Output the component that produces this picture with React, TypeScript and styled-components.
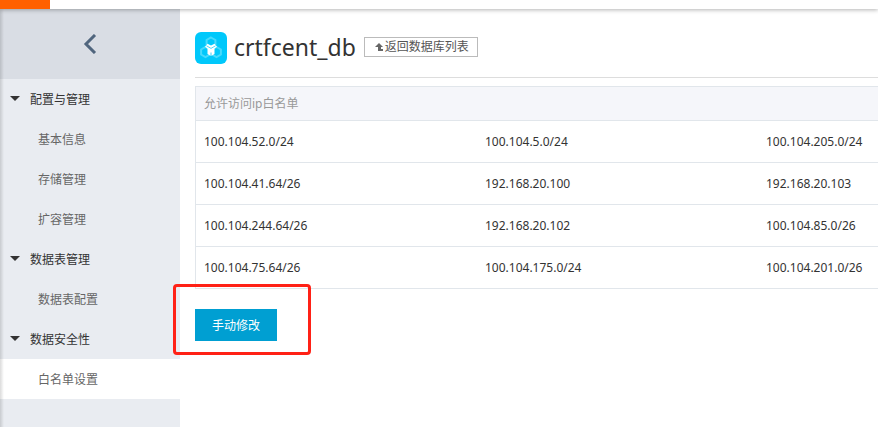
import React from "react";
import styled, { createGlobalStyle } from "styled-components";

const edgeShade = "linear-gradient(to right, rgba(0, 0, 0, 0.14), rgba(0, 0, 0, 0) 4px)";

const GlobalStyle = createGlobalStyle`
  *, *::before, *::after { box-sizing: border-box; }
  html, body, #root { height: 100%; }
  body {
    margin: 0;
    overflow: hidden;
    background: #fff;
    color: #333;
    font-family: "Noto Sans", "Noto Sans CJK SC", sans-serif;
    font-size: 12px;
    line-height: 20px;
  }
`;

const Page = styled.div`
  display: flex;
  flex-direction: column;
  min-height: 100%;
`;

const TopBar = styled.header`
  position: relative;
  z-index: 1;
  height: 9px;
  background: #fff;
  box-shadow: 0 1px 4px rgba(0, 0, 0, 0.3);
`;

const Brand = styled.div`
  width: 50px;
  height: 100%;
  background: #ff6000;
`;

const Body = styled.div`
  display: flex;
  flex: 1;
`;

const Sidebar = styled.nav`
  flex: 0 0 180px;
  background: ${edgeShade}, #e9ecf1;
`;

const Collapse = styled.button`
  display: flex;
  align-items: center;
  justify-content: center;
  width: 100%;
  height: 70px;
  padding: 0;
  border: 0;
  background: ${edgeShade}, #d9dde4;
  cursor: pointer;
`;

const GroupTitle = styled.button`
  display: flex;
  align-items: center;
  gap: 10px;
  width: 100%;
  height: 40px;
  padding: 2px 10px 0;
  border: 0;
  background: none;
  color: #333;
  font: inherit;
  cursor: pointer;
`;

const NavLink = styled.a<{ $active?: boolean }>`
  display: block;
  padding: 11px 38px 9px;
  color: #666;
  text-decoration: none;
  background: ${(p) => (p.$active ? `${edgeShade}, #fff` : "none")};
`;

const Main = styled.main`
  flex: 1;
  min-width: 0;
  padding-left: 15px;
`;

const Heading = styled.div`
  display: flex;
  align-items: flex-start;
  gap: 7px;
  height: 69px;
  margin-bottom: 8px;
  padding-top: 23px;
  border-bottom: 1px solid #ddd;
`;

const HeadingText = styled.div`
  display: flex;
  align-items: center;
  gap: 8px;
`;

const Title = styled.h1`
  margin: 0;
  font-size: 23px;
  font-weight: 400;
  line-height: 30px;
`;

const BackButton = styled.button`
  display: flex;
  align-items: center;
  gap: 1px;
  height: 20px;
  padding: 0 8px 0 10px;
  border: 1px solid #bbb;
  background: #fff;
  color: #555;
  font: inherit;
  line-height: 18px;
  white-space: nowrap;
  cursor: pointer;
`;

const TableViewport = styled.div`
  overflow: hidden;
`;

const Table = styled.table`
  width: 100%;
  min-width: 845px;
  table-layout: fixed;
  border: 1px solid #e1e6eb;
  border-spacing: 0;
`;

const HeadCell = styled.th`
  height: 33px;
  padding: 0 8px;
  background: #f5f6fa;
  color: #999;
  font-weight: 400;
  text-align: left;
`;

const Cell = styled.td`
  height: 42px;
  padding: 0 8px;
  border-top: 1px solid #e1e6eb;
`;

const Actions = styled.div`
  display: flex;
  margin-top: 20px;
`;

const EditArea = styled.div`
  position: relative;
`;

const EditButton = styled.button`
  height: 32px;
  padding: 2px 17px 0;
  border: 0;
  background: #009fd2;
  color: #fff;
  font: inherit;
  cursor: pointer;
`;

const Highlight = styled.div`
  position: absolute;
  inset: -25px -34px -14px -22px;
  border: 3px solid #ff2116;
  border-radius: 4px;
  pointer-events: none;
`;

const groups = [
  { title: "配置与管理", items: ["基本信息", "存储管理", "扩容管理"] },
  { title: "数据表管理", items: ["数据表配置"] },
  { title: "数据安全性", items: ["白名单设置"] },
];

const rows = [
  ["100.104.52.0/24", "100.104.5.0/24", "100.104.205.0/24"],
  ["100.104.41.64/26", "192.168.20.100", "192.168.20.103"],
  ["100.104.244.64/26", "192.168.20.102", "100.104.85.0/26"],
  ["100.104.75.64/26", "100.104.175.0/24", "100.104.201.0/26"],
];

const Logo = () => (
  <svg width="32" height="32" viewBox="0 0 32 32" aria-hidden="true">
    <rect width="32" height="32" rx="6" fill="#00c8fb" />
    <g fill="none" stroke="#48dafc" strokeWidth="2">
      <path d="M16 5.5l4.4 2.5v5L16 15.5 11.6 13V8z" />
      <path d="M10.500 15l4.400 2.500v5L10.500 25l-4.400-2.500v-5z" />
      <path d="M21.500 15l4.400 2.500v5L21.500 25l-4.400-2.500v-5z" />
    </g>
    <path d="M12.5 11.8L16 13.600l3.500-1.800 2.500 3-2.500 1.600V22L16 24l-3.500-2v-5.600L10 14.800z" fill="#fff" />
    <path d="M11.5 13.8L16 16.400l4.500-2.600" fill="none" stroke="#00c8fb" strokeWidth="0.7" />
    <path d="M16 20.500v4" fill="none" stroke="#00c8fb" strokeWidth="0.8" />
  </svg>
);

const Chevron = () => (
  <svg width="14" height="20" viewBox="0 0 14 20" aria-hidden="true">
    <path d="M12 1L3 10l9 9" fill="none" stroke="#50657d" strokeWidth="3" />
  </svg>
);

const Caret = () => (
  <svg width="10" height="8" viewBox="0 0 10 8" aria-hidden="true">
    <path d="M0 0h10L5 5z" fill="#333" />
  </svg>
);

const UpArrow = () => (
  <svg width="9" height="9" viewBox="0 0 9 9" aria-hidden="true">
    <path d="M4 0l4 4H6v2h2v2H3V4H0z" fill="#666" />
  </svg>
);

export default function App() {
  return (
    <Page>
      <GlobalStyle />
      <TopBar>
        <Brand />
      </TopBar>
      <Body>
        <Sidebar>
          <Collapse aria-label="收起">
            <Chevron />
          </Collapse>
          {groups.map((group) => (
            <section key={group.title}>
              <GroupTitle>
                <Caret />
                {group.title}
              </GroupTitle>
              {group.items.map((item) => (
                <NavLink key={item} href="#" $active={item === "白名单设置"}>
                  {item}
                </NavLink>
              ))}
            </section>
          ))}
        </Sidebar>
        <Main>
          <Heading>
            <Logo />
            <HeadingText>
              <Title>crtfcent_db</Title>
              <BackButton>
                <UpArrow />
                返回数据库列表
              </BackButton>
            </HeadingText>
          </Heading>
          <TableViewport>
            <Table>
              <thead>
                <tr>
                  <HeadCell colSpan={3}>允许访问ip白名单</HeadCell>
                </tr>
              </thead>
              <tbody>
                {rows.map((row) => (
                  <tr key={row[0]}>
                    {row.map((ip) => (
                      <Cell key={ip}>{ip}</Cell>
                    ))}
                  </tr>
                ))}
              </tbody>
            </Table>
          </TableViewport>
          <Actions>
            <EditArea>
              <EditButton>手动修改</EditButton>
              <Highlight />
            </EditArea>
          </Actions>
        </Main>
      </Body>
    </Page>
  );
}
